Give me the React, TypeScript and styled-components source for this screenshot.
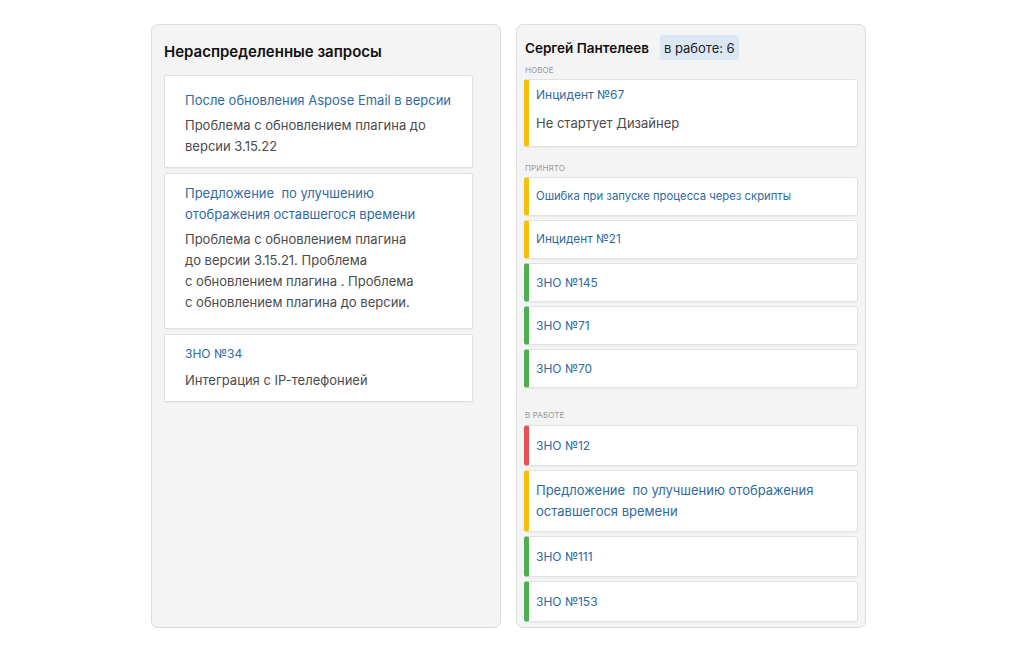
import React from "react";
import styled, { createGlobalStyle } from "styled-components";

const GlobalStyle = createGlobalStyle`
  html, body { margin: 0; padding: 0; background: #ffffff; }
  body { font-family: Inter, "Noto Sans", "Liberation Sans", sans-serif; -webkit-font-smoothing: antialiased; }
  * { box-sizing: border-box; }
`;

const Page = styled.div`
  display: flex;
  gap: 15px;
  padding: 24px 0 0 151px;
  width: 1018px;
  height: 660px;
`;

const Panel = styled.section`
  width: 350px;
  height: 604px;
  background: #f4f4f4;
  border: 1px solid #dcdcdc;
  border-radius: 7px;
  display: flex;
  flex-direction: column;
`;

const LeftPanel = styled(Panel)`
  padding: 17px 27px 0 12px;
`;

const RightPanel = styled(Panel)`
  padding: 10px 7px 0 7px;
`;

const PanelTitle = styled.h2`
  margin: 0 0 13px;
  font-size: 15px;
  line-height: 20px;
  font-weight: 600;
  color: #111;
`;

const LeftList = styled.div`
  display: flex;
  flex-direction: column;
  gap: 5px;
`;

const LeftCard = styled.div<{ $pt: number; $pb: number }>`
  background: #fff;
  border: 1px solid #e0e0e0;
  border-radius: 2px;
  box-shadow: 0 1px 1px rgba(0, 0, 0, 0.04);
  padding: ${(p) => p.$pt}px 20px ${(p) => p.$pb}px;
`;

const CardTitle = styled.div<{ $size?: number }>`
  color: #2f6aa0;
  font-size: ${(p) => p.$size ?? 13}px;
  line-height: 21px;
`;

const CardText = styled.div<{ $mt?: number }>`
  color: #4b4b4b;
  font-size: 13px;
  line-height: 21px;
  margin-top: ${(p) => p.$mt ?? 4}px;
`;

const Header = styled.div`
  display: flex;
  align-items: center;
  gap: 11px;
  padding-left: 1px;
  height: 25px;
`;

const Name = styled.div`
  font-size: 13.5px;
  font-weight: 600;
  color: #111;
`;

const Badge = styled.div`
  background: #dbe8f4;
  border-radius: 3px;
  height: 25px;
  padding: 0 4px;
  display: flex;
  align-items: center;
  font-size: 13px;
  color: #222;
`;

const SectionLabel = styled.div<{ $mt: number; $mb: number }>`
  margin: ${(p) => p.$mt}px 0 ${(p) => p.$mb}px 1px;
  font-size: 8px;
  line-height: 10px;
  color: #9a9a9a;
  text-transform: uppercase;
  letter-spacing: 0.1px;
`;

const TaskList = styled.div`
  display: flex;
  flex-direction: column;
  gap: 4px;
`;

const TaskCard = styled.div<{ $accent: string; $desc?: boolean; $pad: number }>`
  background: #fff;
  border: 1px solid #e2e2e2;
  border-left: 5px solid ${(p) => p.$accent};
  border-radius: 3px;
  box-shadow: 0 1px 1px rgba(0, 0, 0, 0.04);
  padding: ${(p) => (p.$desc ? "4px 10px 12px 7px" : `${p.$pad}px 10px ${p.$pad}px 7px`)};
`;

const TaskTitle = styled.div<{ $size?: number }>`
  color: #2f6aa0;
  font-size: ${(p) => p.$size ?? 12}px;
  line-height: 21px;
`;

const TaskText = styled.div`
  color: #4b4b4b;
  font-size: 13px;
  line-height: 22px;
  margin-top: 7px;
`;

const YELLOW = "#f6bf0c";
const GREEN = "#4caf50";
const RED = "#e65156";

type Task = { title: React.ReactNode; key: string; color: string; size?: number; desc?: string };

const sections: { label: string; mt: number; mb: number; pad: number; tasks: Task[] }[] = [
  {
    label: "Новое",
    mt: 5,
    mb: 4,
    pad: 8,
    tasks: [{ key: "i67", title: "Инцидент №67", color: YELLOW, desc: "Не стартует Дизайнер" }],
  },
  {
    label: "Принято",
    mt: 16,
    mb: 4,
    pad: 8,
    tasks: [
      { key: "err", title: "Ошибка при запуске процесса через скрипты", color: YELLOW, size: 11.3 },
      { key: "i21", title: "Инцидент №21", color: YELLOW, size: 11.8 },
      { key: "z145", title: "ЗНО №145", color: GREEN },
      { key: "z71", title: "ЗНО №71", color: GREEN },
      { key: "z70", title: "ЗНО №70", color: GREEN },
    ],
  },
  {
    label: "В работе",
    mt: 22,
    mb: 5,
    pad: 9,
    tasks: [
      { key: "z12", title: "ЗНО №12", color: RED },
      {
        key: "pr",
        title: (
          <>
            Предложение&nbsp; по улучшению отображения
            <br />
            оставшегося времени
          </>
        ),
        color: YELLOW,
        size: 13,
      },
      { key: "z111", title: "ЗНО №111", color: GREEN },
      { key: "z153", title: "ЗНО №153", color: GREEN },
    ],
  },
];

export default function App() {
  return (
    <>
      <GlobalStyle />
      <Page>
        <LeftPanel>
          <PanelTitle>Нераспределенные запросы</PanelTitle>
          <LeftList>
            <LeftCard $pt={14} $pb={10}>
              <CardTitle>После обновления Aspose Email в версии</CardTitle>
              <CardText>
                Проблема с обновлением плагина до
                <br />
                версии 3.15.22
              </CardText>
            </LeftCard>
            <LeftCard $pt={9} $pb={15}>
              <CardTitle>
                Предложение&nbsp; по улучшению
                <br />
                отображения оставшегося времени
              </CardTitle>
              <CardText>
                Проблема с обновлением плагина
                <br />
                до версии 3.15.21. Проблема
                <br />
                с обновлением плагина . Проблема
                <br />
                с обновлением плагина до версии.
              </CardText>
            </LeftCard>
            <LeftCard $pt={8} $pb={10}>
              <CardTitle $size={12}>ЗНО №34</CardTitle>
              <CardText $mt={6}>Интеграция с IP-телефонией</CardText>
            </LeftCard>
          </LeftList>
        </LeftPanel>
        <RightPanel>
          <Header>
            <Name>Сергей Пантелеев</Name>
            <Badge>в работе: 6</Badge>
          </Header>
          {sections.map((s) => (
            <React.Fragment key={s.label}>
              <SectionLabel $mt={s.mt} $mb={s.mb}>
                {s.label}
              </SectionLabel>
              <TaskList>
                {s.tasks.map((t) => (
                  <TaskCard key={t.key} $accent={t.color} $desc={!!t.desc} $pad={s.pad}>
                    <TaskTitle $size={t.size}>{t.title}</TaskTitle>
                    {t.desc && <TaskText>{t.desc}</TaskText>}
                  </TaskCard>
                ))}
              </TaskList>
            </React.Fragment>
          ))}
        </RightPanel>
      </Page>
    </>
  );
}
